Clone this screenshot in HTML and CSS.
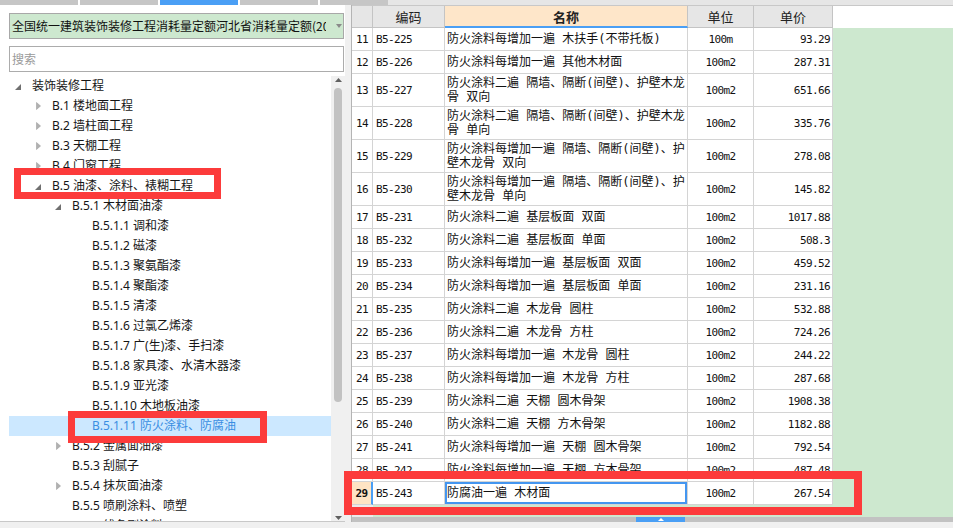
FILE: index.html
```html
<!DOCTYPE html>
<html lang="zh-CN">
<head>
<meta charset="utf-8">
<title>定额库</title>
<link rel="stylesheet" href="styles.css">
</head>
<body>
<div class="tabs">
  <span class="tab"></span><span class="tab"></span><span class="tab active"></span><span class="tab"></span><span class="tab last"></span>
</div>
<div class="main">
  <aside class="left">
    <div class="combo">
      <span class="combo-text">全国统一建筑装饰装修工程消耗量定额河北省消耗量定额(2015)</span>
      <span class="combo-arrow"><svg width="6" height="4" viewBox="0 0 6 4"><path d="M0 0H6L3 4Z" fill="#8a8a8a"/></svg></span>
    </div>
    <div class="search">搜索</div>
    <div class="tree">
      <ul class="tree-list">
        <li class="node l0"><span class="tw"><svg class="ex" width="6" height="6" viewBox="0 0 6 6"><path d="M6 0V6H0Z" fill="#707070"/></svg></span>装饰装修工程</li>
        <li class="node l1"><span class="tw"><svg class="co" width="5" height="8" viewBox="0 0 5 8"><path d="M0.5 0.5L4.5 4L0.5 7.5Z" fill="#b0b0b0" stroke="#a0a0a0" stroke-width="0.6"/></svg></span>B.1 楼地面工程</li>
        <li class="node l1"><span class="tw"><svg class="co" width="5" height="8" viewBox="0 0 5 8"><path d="M0.5 0.5L4.5 4L0.5 7.5Z" fill="#b0b0b0" stroke="#a0a0a0" stroke-width="0.6"/></svg></span>B.2 墙柱面工程</li>
        <li class="node l1"><span class="tw"><svg class="co" width="5" height="8" viewBox="0 0 5 8"><path d="M0.5 0.5L4.5 4L0.5 7.5Z" fill="#b0b0b0" stroke="#a0a0a0" stroke-width="0.6"/></svg></span>B.3 天棚工程</li>
        <li class="node l1"><span class="tw"><svg class="co" width="5" height="8" viewBox="0 0 5 8"><path d="M0.5 0.5L4.5 4L0.5 7.5Z" fill="#b0b0b0" stroke="#a0a0a0" stroke-width="0.6"/></svg></span>B.4 门窗工程</li>
        <li class="node l1"><span class="tw"><svg class="ex" width="6" height="6" viewBox="0 0 6 6"><path d="M6 0V6H0Z" fill="#707070"/></svg></span>B.5 油漆、涂料、裱糊工程</li>
        <li class="node l2"><span class="tw"><svg class="ex" width="6" height="6" viewBox="0 0 6 6"><path d="M6 0V6H0Z" fill="#707070"/></svg></span>B.5.1 木材面油漆</li>
        <li class="node l3"><span class="tw"></span>B.5.1.1 调和漆</li>
        <li class="node l3"><span class="tw"></span>B.5.1.2 磁漆</li>
        <li class="node l3"><span class="tw"></span>B.5.1.3 聚氨酯漆</li>
        <li class="node l3"><span class="tw"></span>B.5.1.4 聚酯漆</li>
        <li class="node l3"><span class="tw"></span>B.5.1.5 清漆</li>
        <li class="node l3"><span class="tw"></span>B.5.1.6 过氯乙烯漆</li>
        <li class="node l3"><span class="tw"></span>B.5.1.7 广(生)漆、手扫漆</li>
        <li class="node l3"><span class="tw"></span>B.5.1.8 家具漆、水清木器漆</li>
        <li class="node l3"><span class="tw"></span>B.5.1.9 亚光漆</li>
        <li class="node l3"><span class="tw"></span>B.5.1.10 木地板油漆</li>
        <li class="node l3 sel"><span class="tw"></span>B.5.1.11 防火涂料、防腐油</li>
        <li class="node l2"><span class="tw"><svg class="co" width="5" height="8" viewBox="0 0 5 8"><path d="M0.5 0.5L4.5 4L0.5 7.5Z" fill="#b0b0b0" stroke="#a0a0a0" stroke-width="0.6"/></svg></span>B.5.2 金属面油漆</li>
        <li class="node l2"><span class="tw"></span>B.5.3 刮腻子</li>
        <li class="node l2"><span class="tw"><svg class="co" width="5" height="8" viewBox="0 0 5 8"><path d="M0.5 0.5L4.5 4L0.5 7.5Z" fill="#b0b0b0" stroke="#a0a0a0" stroke-width="0.6"/></svg></span>B.5.4 抹灰面油漆</li>
        <li class="node l2"><span class="tw"></span>B.5.5 喷刷涂料、喷塑</li>
        <li class="node l2"><span class="tw"></span>B.5.6 线条刷涂料</li>
      </ul>
      <div class="vscroll">
        <svg class="v-up" width="7" height="4" viewBox="0 0 7 4"><path d="M0 4L3.5 0L7 4Z" fill="#606060"/></svg>
        <div class="vthumb"></div>
        <svg class="v-down" width="7" height="4" viewBox="0 0 7 4"><path d="M0 0H7L3.5 4Z" fill="#606060"/></svg>
      </div>
    </div>
  </aside>
  <div class="splitter"></div>
  <section class="grid">
    <div class="ghead">
      <div class="cols hrow">
        <div class="h"></div>
        <div class="h">编码</div>
        <div class="h hname">名称</div>
        <div class="h">单位</div>
        <div class="h">单价</div>
      </div>
      <div class="hblank"></div>
    </div>
    <div class="gbody">
      <div class="rows">
        <div class="cols r"><div class="c-num m">11</div><div class="c-code m">B5-225</div><div class="c-name">防火涂料每增加一遍 木扶手(不带托板)</div><div class="c-unit m">100m</div><div class="c-price m">93.29</div></div>
        <div class="cols r"><div class="c-num m">12</div><div class="c-code m">B5-226</div><div class="c-name">防火涂料每增加一遍 其他木材面</div><div class="c-unit m">100m2</div><div class="c-price m">287.31</div></div>
        <div class="cols r tall"><div class="c-num m">13</div><div class="c-code m">B5-227</div><div class="c-name">防火涂料二遍 隔墙、隔断(间壁)、护壁木龙<br>骨 双向</div><div class="c-unit m">100m2</div><div class="c-price m">651.66</div></div>
        <div class="cols r tall"><div class="c-num m">14</div><div class="c-code m">B5-228</div><div class="c-name">防火涂料二遍 隔墙、隔断(间壁)、护壁木龙<br>骨 单向</div><div class="c-unit m">100m2</div><div class="c-price m">335.76</div></div>
        <div class="cols r tall"><div class="c-num m">15</div><div class="c-code m">B5-229</div><div class="c-name">防火涂料每增加一遍 隔墙、隔断(间壁)、护<br>壁木龙骨 双向</div><div class="c-unit m">100m2</div><div class="c-price m">278.08</div></div>
        <div class="cols r tall"><div class="c-num m">16</div><div class="c-code m">B5-230</div><div class="c-name">防火涂料每增加一遍 隔墙、隔断(间壁)、护<br>壁木龙骨 单向</div><div class="c-unit m">100m2</div><div class="c-price m">145.82</div></div>
        <div class="cols r"><div class="c-num m">17</div><div class="c-code m">B5-231</div><div class="c-name">防火涂料二遍 基层板面 双面</div><div class="c-unit m">100m2</div><div class="c-price m">1017.88</div></div>
        <div class="cols r"><div class="c-num m">18</div><div class="c-code m">B5-232</div><div class="c-name">防火涂料二遍 基层板面 单面</div><div class="c-unit m">100m2</div><div class="c-price m">508.3</div></div>
        <div class="cols r"><div class="c-num m">19</div><div class="c-code m">B5-233</div><div class="c-name">防火涂料每增加一遍 基层板面 双面</div><div class="c-unit m">100m2</div><div class="c-price m">459.52</div></div>
        <div class="cols r"><div class="c-num m">20</div><div class="c-code m">B5-234</div><div class="c-name">防火涂料每增加一遍 基层板面 单面</div><div class="c-unit m">100m2</div><div class="c-price m">231.16</div></div>
        <div class="cols r"><div class="c-num m">21</div><div class="c-code m">B5-235</div><div class="c-name">防火涂料二遍 木龙骨 圆柱</div><div class="c-unit m">100m2</div><div class="c-price m">532.88</div></div>
        <div class="cols r"><div class="c-num m">22</div><div class="c-code m">B5-236</div><div class="c-name">防火涂料二遍 木龙骨 方柱</div><div class="c-unit m">100m2</div><div class="c-price m">724.26</div></div>
        <div class="cols r"><div class="c-num m">23</div><div class="c-code m">B5-237</div><div class="c-name">防火涂料每增加一遍 木龙骨 圆柱</div><div class="c-unit m">100m2</div><div class="c-price m">244.22</div></div>
        <div class="cols r"><div class="c-num m">24</div><div class="c-code m">B5-238</div><div class="c-name">防火涂料每增加一遍 木龙骨 方柱</div><div class="c-unit m">100m2</div><div class="c-price m">287.68</div></div>
        <div class="cols r"><div class="c-num m">25</div><div class="c-code m">B5-239</div><div class="c-name">防火涂料二遍 天棚 圆木骨架</div><div class="c-unit m">100m2</div><div class="c-price m">1908.38</div></div>
        <div class="cols r"><div class="c-num m">26</div><div class="c-code m">B5-240</div><div class="c-name">防火涂料二遍 天棚 方木骨架</div><div class="c-unit m">100m2</div><div class="c-price m">1182.88</div></div>
        <div class="cols r"><div class="c-num m">27</div><div class="c-code m">B5-241</div><div class="c-name">防火涂料每增加一遍 天棚 圆木骨架</div><div class="c-unit m">100m2</div><div class="c-price m">792.54</div></div>
        <div class="cols r"><div class="c-num m">28</div><div class="c-code m">B5-242</div><div class="c-name">防火涂料每增加一遍 天棚 方木骨架</div><div class="c-unit m">100m2</div><div class="c-price m">487.48</div></div>
        <div class="cols r cur"><div class="c-num m">29</div><div class="c-code m">B5-243</div><div class="c-name">防腐油一遍 木材面</div><div class="c-unit m">100m2</div><div class="c-price m">267.54</div></div>
      </div>
    </div>
    <div class="hscroll"><div class="hthumb"><svg width="6" height="3" viewBox="0 0 6 3"><path d="M0 3L3 0L6 3Z" fill="#ffffff"/></svg></div></div>
  </section>
</div>
<div class="status"></div>

<div class="mark mark-b5"></div>
<div class="mark mark-sel"></div>
<div class="mark mark-row"></div>
</body>
</html>
```

FILE: styles.css
```css
* { box-sizing: border-box; }

html, body { margin: 0; padding: 0; }

body {
  width: 953px;
  height: 528px;
  overflow: hidden;
  position: relative;
  display: flex;
  flex-direction: column;
  background: #f0f0f0;
  font-family: "Noto Sans", "Noto Sans CJK SC", sans-serif;
  font-size: 12px;
  color: #1a1a1a;
}

/* top tab strip */
.tabs {
  flex: none;
  height: 5px;
  display: flex;
  background: #e6e6e6;
}
.tab {
  width: 80px;
  background: #c6c6c6;
  border-right: 2px solid #ffffff;
}
.tab.active { background: #4a9ff5; }
.tab.last { width: 68px; border-right: none; }

.main {
  flex: 1;
  min-height: 0;
  display: flex;
}

/* left panel */
.left {
  width: 345px;
  flex: none;
  display: flex;
  flex-direction: column;
  background: #ffffff;
}

.combo {
  margin: 8px 1px 0 9px;
  height: 26px;
  border: 1px solid #a8a8a8;
  background: #cde8cf;
  display: flex;
  align-items: center;
}
.combo-text {
  flex: 1;
  min-width: 0;
  overflow: hidden;
  white-space: nowrap;
  padding-left: 2px;
  line-height: 24px;
  font-family: "Noto Sans CJK SC", sans-serif;
  color: #111;
}
.combo-arrow {
  width: 17px;
  flex: none;
  display: flex;
  align-items: center;
  padding-left: 10px;
}

.search {
  margin: 7px 1px 0 9px;
  height: 26px;
  border: 1px solid #acacac;
  padding-left: 2px;
  line-height: 24px;
  color: #9a9a9a;
  font-family: "Noto Sans CJK SC", sans-serif;
}

.tree {
  margin-top: 4px;
  flex: 1;
  min-height: 0;
  display: flex;
  border-bottom: 1px solid #c8c8c8;
}
.tree-list {
  flex: 1;
  min-width: 0;
  list-style: none;
  margin: 0;
  padding: 0 0 0 9px;
  overflow: hidden;
}
.node {
  height: 20px;
  line-height: 20px;
  display: flex;
  align-items: center;
  white-space: nowrap;
  color: #161616;
}
.node.sel { background: #cce8ff; color: #3a8ee2; }
.l0 { padding-left: 6px; }
.l1 { padding-left: 26px; }
.l2 { padding-left: 46px; }
.l3 { padding-left: 66px; }
.tw {
  width: 17px;
  flex: none;
  display: flex;
  align-items: center;
}
.tw .ex { margin-top: 2px; }
.tw .co { margin-left: 1px; }

.vscroll {
  width: 14px;
  flex: none;
  background: #f0f0f0;
  display: flex;
  flex-direction: column;
  align-items: center;
  padding: 2px 0 1px;
}
.vthumb {
  margin-top: 6px;
  width: 8px;
  height: 314px;
  border-radius: 4px;
  background: #c2c2c2;
}
.v-down { margin-top: auto; }

.splitter {
  width: 7px;
  flex: none;
  background: #f0f0f0;
  border-right: 1px solid #b4b4b4;
}

/* grid */
.grid {
  flex: 1;
  min-width: 0;
  display: flex;
  flex-direction: column;
  background: #ffffff;
}
.cols {
  display: grid;
  grid-template-columns: 21px 72px 243px 66px 79px;
}
.ghead {
  flex: none;
  height: 23px;
  display: flex;
  border-top: 1px solid #c8c8c8;
}
.hrow { width: 481px; }
.h {
  background: #e6e6e6;
  border-right: 1px solid #c4c4c4;
  border-bottom: 1px solid #c4c4c4;
  display: flex;
  align-items: center;
  justify-content: center;
  font-family: "Noto Sans CJK SC", sans-serif;
  font-size: 13px;
  color: #222;
}
.h.hname {
  background: #fee6c9;
  font-weight: bold;
  border-bottom: 2px solid #4a9ff5;
}
.hblank { flex: 1; background: #ffffff; }

.gbody {
  flex: 1;
  min-height: 0;
  overflow: hidden;
  background: linear-gradient(to right, #ebebeb 21px, #cde8cf 21px);
}
.rows { width: 481px; background: #ffffff; }
.r { height: 23px; }
.r.tall { height: 33px; }
.r > div {
  border-right: 1px solid #d4d4d4;
  border-bottom: 1px solid #d4d4d4;
  display: flex;
  align-items: center;
  overflow: hidden;
  white-space: nowrap;
}
.m {
  font-family: "DejaVu Sans Mono", monospace;
  font-size: 11px;
  letter-spacing: -0.6px;
  color: #111;
}
.c-num { justify-content: center; }
.c-code { padding-left: 3px; }
.c-name {
  padding-left: 2px;
  font-family: "DejaVu Sans Mono", "Noto Sans CJK SC", monospace;
  font-size: 12px;
  line-height: 14px;
  color: #111;
}
.c-unit { justify-content: center; }
.c-price { justify-content: flex-end; padding-right: 2px; }

.r.cur .c-num {
  background: #fee4c4;
  font-weight: bold;
  border-right: 2px solid #4a9ff5;
}
.r.cur .c-name { box-shadow: inset 0 0 0 2px #4496f0; }

.hscroll {
  flex: none;
  height: 5px;
  background: #c2c2c2;
  display: flex;
  padding-left: 284px;
}
.hthumb {
  width: 49px;
  background: #4a9ff5;
  display: flex;
  justify-content: center;
  align-items: flex-start;
  padding-top: 1px;
}

.status {
  flex: none;
  height: 6px;
  background: #f0f0f0;
}

/* red annotation boxes drawn over the screenshot */
.mark {
  position: absolute;
  border: 7px solid #fc3b3b;
}
.mark-b5 { left: 14px; top: 168px; width: 207px; height: 31px; }
.mark-sel { left: 68px; top: 411px; width: 199px; height: 32px; }
.mark-row { left: 344px; top: 471px; width: 518px; height: 44px; border-width: 8px; }
```
